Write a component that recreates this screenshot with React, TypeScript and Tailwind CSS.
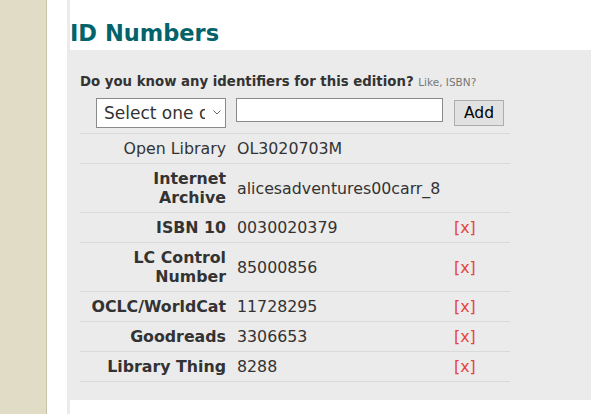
import { useState } from "react";

type Ident = { label: string[]; value: string; bold: boolean; removable: boolean };

const idents: Ident[] = [
  { label: ["Open Library"], value: "OL3020703M", bold: false, removable: false },
  { label: ["Internet", "Archive"], value: "alicesadventures00carr_8", bold: true, removable: false },
  { label: ["ISBN 10"], value: "0030020379", bold: true, removable: true },
  { label: ["LC Control", "Number"], value: "85000856", bold: true, removable: true },
  { label: ["OCLC/WorldCat"], value: "11728295", bold: true, removable: true },
  { label: ["Goodreads"], value: "3306653", bold: true, removable: true },
  { label: ["Library Thing"], value: "8288", bold: true, removable: true },
];

export default function App() {
  const [newId, setNewId] = useState("");

  return (
    <div className="flex min-h-[414px] bg-white font-['DejaVu_Sans',Verdana,sans-serif] text-[#333]">
      <div className="w-[47px] shrink-0 border-r border-[#c9c3a8] bg-[#e1dcc5]" />
      <div className="w-[20px] shrink-0" />
      <div className="flex flex-1 flex-col bg-[#ebebeb] pl-[3px]">
        <div className="h-[50px] bg-white pt-[20px]">
          <h2 className="text-[22.5px] font-bold leading-[27px] text-[#02636b]">ID Numbers</h2>
        </div>

        <div className="h-[350px] pl-[10px] pt-[23px]">
          <p className="text-[13.3px] font-bold leading-[18px]">
            Do you know any identifiers for this edition?{" "}
            <span className="text-[10.5px] font-normal text-[#777]">Like, ISBN?</span>
          </p>

          <div className="w-[430px]">
            <div className="mt-[7px] grid grid-cols-[150px_217px_63px] items-start border-b border-[#dadada] pb-[5px]">
              <div className="relative ml-auto mr-[4px] w-[130px]">
                <select
                  defaultValue=""
                  className="h-[30px] w-[130px] appearance-none overflow-hidden border border-[#8a8a8a] bg-white pl-[7px] pr-[20px] text-[17px] leading-[28px] text-[#333] outline-none"
                >
                  <option value="">Select one of many...</option>
                  <option value="isbn_13">ISBN 13</option>
                  <option value="lccn">LC Control Number</option>
                </select>
                <svg
                  className="pointer-events-none absolute right-[5px] top-[12px]"
                  width="8"
                  height="5"
                  viewBox="0 0 8 5"
                  fill="none"
                  stroke="#666"
                  strokeWidth="1"
                >
                  <path d="M0.5 0.5 L4 4 L7.5 0.5" />
                </svg>
              </div>
              <input
                value={newId}
                onChange={(e) => setNewId(e.target.value)}
                className="ml-[6px] h-[24px] w-[207px] border border-[#8a8a8a] bg-white px-1 text-[14px] outline-none"
              />
              <button className="ml-[7px] mt-[2px] h-[26px] w-[50px] border border-[#adadad] bg-[#e1e1e1] text-[15.5px] leading-[24px] text-black">
                Add
              </button>
            </div>

            {idents.map((id) => (
              <div
                key={id.value}
                className="grid grid-cols-[150px_217px_63px] items-center border-b border-[#dadada] py-[5px] text-[15.8px] leading-[19px]"
              >
                <div className={`pr-[4px] text-right ${id.bold ? "font-bold" : ""}`}>
                  {id.label.map((l) => (
                    <div key={l}>{l}</div>
                  ))}
                </div>
                <div className="pl-[7px]">{id.value}</div>
                <div className="pl-[7px] text-[#e8433b]">{id.removable ? "[x]" : ""}</div>
              </div>
            ))}
          </div>
        </div>

        <div className="flex-1 bg-white" />
      </div>
    </div>
  );
}
